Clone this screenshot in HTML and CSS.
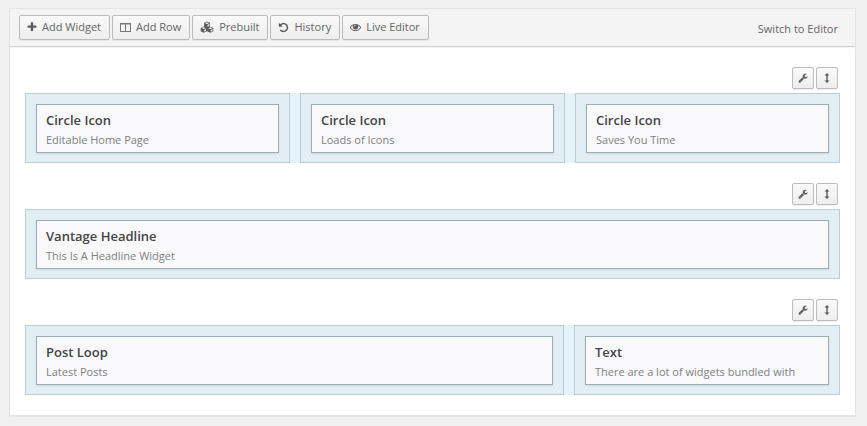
FILE: index.html
```html
<!DOCTYPE html>
<html lang="en">
<head>
<meta charset="utf-8">
<title>Page Builder</title>
<link rel="stylesheet" href="styles.css">
</head>
<body>
<svg class="symbols">
  <symbol id="wrench" viewBox="0 0 1792 1792"><path d="M448 1472q0-26-19-45t-45-19-45 19-19 45 19 45 45 19 45-19 19-45zm644-420l-682 682q-37 37-90 37-52 0-91-37l-106-108q-38-36-38-90 0-53 38-91l681-681q39 98 114.500 173.500t173.500 114.500zm634-435q0 39-23 106-47 134-164.500 217.500t-258.500 83.500q-185 0-316.500-131.500t-131.500-316.500 131.500-316.500 316.500-131.500q58 0 121.500 16.500t107.500 46.500q16 11 16 28t-16 28l-293 169v224l193 107q5-3 79-48.500t135.500-81 70.500-35.500q15 0 23.500 10t8.500 25z"/></symbol>
  <symbol id="move" viewBox="0 0 10 12"><path d="M5 1 7.500 3.500H5.700v5h1.800L5 11 2.500 8.500h1.800v-5H2.500z"/></symbol>
</svg>
<main class="panel">
  <header class="toolbar">
    <div class="actions">
      <button class="button" type="button"><svg class="icon small" viewBox="100 100 1600 1600"><path d="M1600 736v192q0 40-28 68t-68 28h-416v416q0 40-28 68t-68 28h-192q-40 0-68-28t-28-68v-416h-416q-40 0-68-28t-28-68v-192q0-40 28-68t68-28h416v-416q0-40 28-68t68-28h192q40 0 68 28t28 68v416h416q40 0 68 28t28 68z"/></svg>Add Widget</button>
      <button class="button" type="button"><svg class="icon columns" viewBox="0 0 11 11"><path fill-rule="evenodd" d="M0 1h11v9H0zM1 2.500V9h4V2.500zM6 2.500V9h4V2.500z"/></svg>Add Row</button>
      <button class="button" type="button"><svg class="icon wide" viewBox="0 0 14 12"><path fill-rule="evenodd" d="M7 .5l2.900 1.300v3.600l3.400 1.500v3.300L10.300 11.700 7 10.200 3.700 11.700 .7 10.200V6.900l3.400-1.500V1.800zM7 1.300 5 2.200 7 3.100l2-.9zM7.500 3.900v1.900l1.700-.8v-1.900zM3.700 6.300l-2 .9 2 .9 2-.9zM4.200 8.900v1.900l1.800-.9V8.100zM10.300 6.300l-2 .9 2 .9 2-.9zM10.800 8.900v1.900l1.700-.9V8.100z"/></svg>Prebuilt</button>
      <button class="button" type="button"><svg class="icon" viewBox="0 0 1792 1792"><path d="M1664 896q0 156-61 298t-164 245-245 164-298 61q-172 0-327-72.500t-264-204.500q-7-10-6.500-22.500t8.500-20.500l137-138q10-9 25-9 16 2 23 12 73 95 179 147t225 52q104 0 198.500-40.500t163.500-109.500 109.500-163.500 40.500-198.500-40.500-198.500-109.500-163.500-163.500-109.500-198.500-40.500q-98 0-188 35.500t-160 101.500l137 138q31 30 14 69-17 40-59 40h-448q-26 0-45-19t-19-45v-448q0-42 40-59 39-17 69 14l130 129q107-101 244.500-156.500t284.500-55.500q156 0 298 61t245 164 164 245 61 298z"/></svg>History</button>
      <button class="button" type="button"><svg class="icon" viewBox="0 64 1792 1792"><path d="M1664 960q-152-236-381-353 61 104 61 225 0 185-131.500 316.500t-316.500 131.500-316.500-131.500-131.500-316.500q0-121 61-225-229 117-381 353 133 205 333.500 326.500t434.500 121.500 434.500-121.500 333.500-326.500zm-720-384q0-20-14-34t-34-14q-125 0-214.500 89.500t-89.500 214.500q0 20 14 34t34 14 34-14 14-34q0-86 61-147t147-61q20 0 34-14t14-34zm848 384q0 34-20 69-140 230-376.500 368.500t-499.500 138.500-499.500-139-376.500-368q-20-35-20-69t20-69q140-229 376.500-368t499.500-139 499.500 139 376.500 368q20 35 20 69z"/></svg>Live Editor</button>
    </div>
    <a class="switch" href="#">Switch to Editor</a>
  </header>
  <div class="rows">
    <section>
      <div class="tools">
        <button class="button tool" type="button" aria-label="Edit row"><svg class="icon small"><use href="#wrench"/></svg></button>
        <button class="button tool" type="button" aria-label="Move row"><svg class="icon tall"><use href="#move"/></svg></button>
      </div>
      <div class="cells thirds">
        <div class="cell"><article class="widget"><h2>Circle Icon</h2><p>Editable Home Page</p></article></div>
        <div class="cell"><article class="widget"><h2>Circle Icon</h2><p>Loads of Icons</p></article></div>
        <div class="cell"><article class="widget"><h2>Circle Icon</h2><p>Saves You Time</p></article></div>
      </div>
    </section>
    <section>
      <div class="tools">
        <button class="button tool" type="button" aria-label="Edit row"><svg class="icon small"><use href="#wrench"/></svg></button>
        <button class="button tool" type="button" aria-label="Move row"><svg class="icon tall"><use href="#move"/></svg></button>
      </div>
      <div class="cells">
        <div class="cell"><article class="widget"><h2>Vantage Headline</h2><p>This Is A Headline Widget</p></article></div>
      </div>
    </section>
    <section>
      <div class="tools">
        <button class="button tool" type="button" aria-label="Edit row"><svg class="icon small"><use href="#wrench"/></svg></button>
        <button class="button tool" type="button" aria-label="Move row"><svg class="icon tall"><use href="#move"/></svg></button>
      </div>
      <div class="cells main-side">
        <div class="cell"><article class="widget"><h2>Post Loop</h2><p>Latest Posts</p></article></div>
        <div class="cell"><article class="widget"><h2>Text</h2><p>There are a lot of widgets bundled with</p></article></div>
      </div>
    </section>
  </div>
</main>
</body>
</html>
```
FILE: styles.css
```css
* { box-sizing: border-box; }

body {
  margin: 0;
  padding: 8px 11px 8px 9px;
  background: #f0f0f0;
  font: 11px/16px "Open Sans", sans-serif;
  color: #666;
}

.symbols { display: none; }

.panel {
  background: #fff;
  border: 1px solid #e4e4e4;
  box-shadow: 0 1px 1px rgba(0, 0, 0, 0.04);
}

.toolbar {
  display: flex;
  justify-content: space-between;
  align-items: center;
  padding: 6px 17px 6px 9px;
  background: #f4f4f4;
  border-bottom: 1px solid #d0d0d0;
  box-shadow: 0 1px 1px rgba(0, 0, 0, 0.04);
}

.actions {
  display: flex;
  gap: 2px;
}

.button {
  display: flex;
  align-items: center;
  justify-content: center;
  gap: 5px;
  height: 25px;
  margin: 0;
  padding: 0 8px 1px 7px;
  border: 1px solid #bbb;
  border-radius: 2px;
  background: linear-gradient(#f9f9f9, #eee);
  box-shadow: 0 1px 1px rgba(0, 0, 0, 0.06);
  font: inherit;
  color: #666;
  white-space: nowrap;
}

.icon {
  flex: none;
  width: 11px;
  height: 11px;
  fill: #5c5c5c;
}

.icon.small {
  width: 10px;
  height: 10px;
}

.icon.wide {
  width: 14px;
  height: 12px;
}

.icon.tall {
  width: 10px;
  height: 12px;
}

.icon.columns { fill: #777; }

.switch {
  padding-top: 3px;
  color: #666;
  text-decoration: none;
}

.rows {
  display: grid;
  gap: 20px;
  padding: 20px 15px;
}

.tools {
  display: flex;
  justify-content: flex-end;
  gap: 2px;
  padding: 0 2px 4px;
}

.tool {
  width: 22px;
  height: 22px;
  padding: 0;
}

.cells {
  display: grid;
  gap: 10px;
  background: #e4f2fa;
}

.thirds { grid-template-columns: repeat(3, 1fr); }
.main-side { grid-template-columns: 539fr 266fr; }

.cell {
  min-width: 0;
  padding: 10px 10px 9px;
  background: #e2eef3;
  border: 1px solid #bccdd2;
}

.widget {
  padding: 7px 9px 4px;
  background: #f9f9fb;
  border: 1px solid #9aafb4;
  box-shadow: 0 1px 2px rgba(0, 0, 0, 0.08);
}

.widget h2 {
  margin: 0 0 3px;
  font-size: 13px;
  line-height: 17px;
  font-weight: 600;
  color: #444;
}

.widget p {
  margin: 0;
  color: #808080;
}
```
